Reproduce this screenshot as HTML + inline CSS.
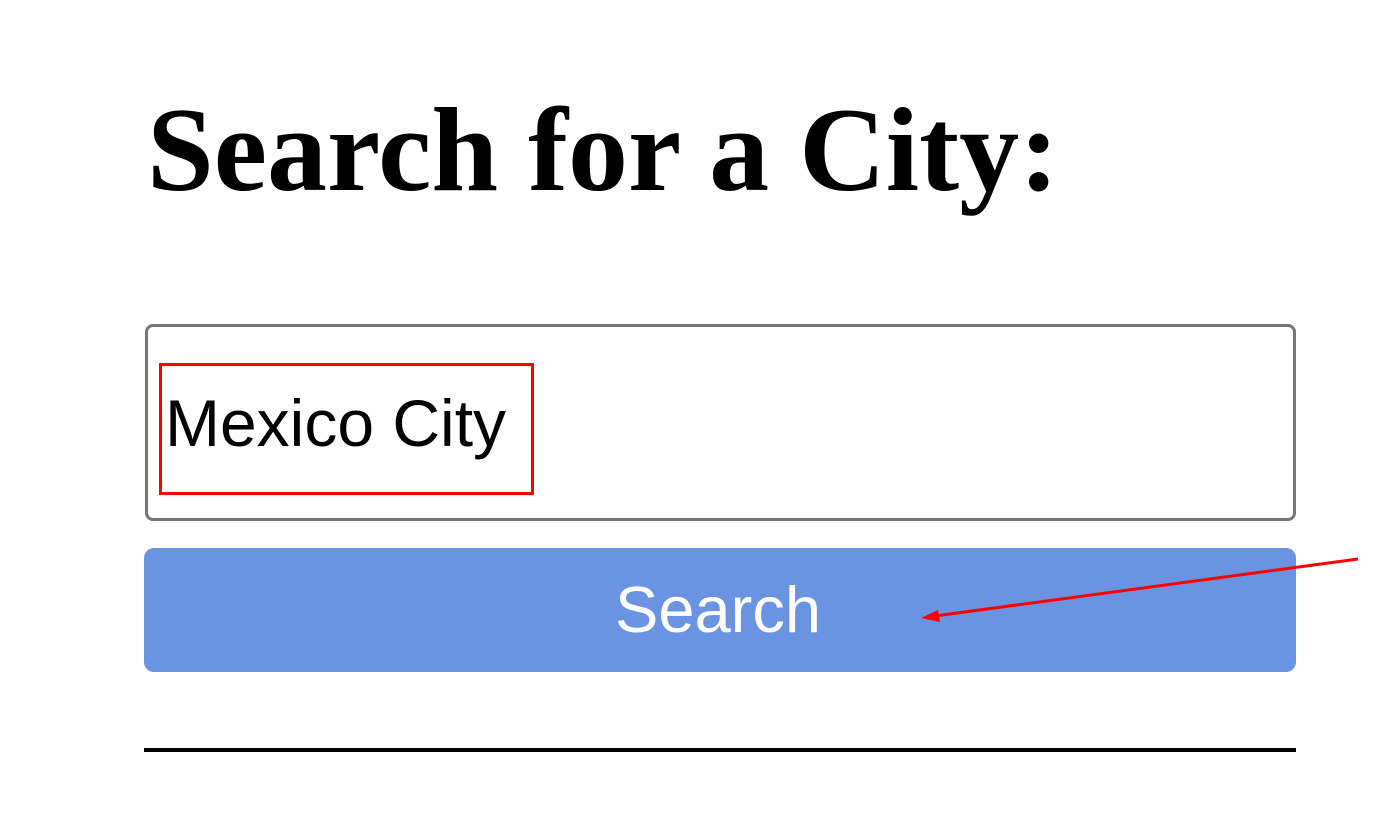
<!DOCTYPE html>
<html><head><meta charset="utf-8"><style>
html,body{margin:0;padding:0;background:#fff;width:1397px;height:819px;overflow:hidden;position:relative}
.h{position:absolute;left:147px;top:75px;font-family:"Liberation Serif",serif;font-weight:bold;font-size:120px;line-height:150px;margin:0;color:#000;white-space:nowrap}
.inp{position:absolute;left:145px;top:324px;width:1145px;height:191px;border:3px solid #777;border-radius:8px}
.txt{position:absolute;left:165px;top:385px;font-family:"Liberation Sans",sans-serif;font-size:66px;line-height:76px;color:#000;white-space:nowrap}
.red{position:absolute;left:159px;top:363px;width:369px;height:126px;border:3px solid #f00}
.btn{position:absolute;left:144px;top:548px;width:1152px;height:124px;background:#6a93e2;border-radius:10px;color:#fff;font-family:"Liberation Sans",sans-serif;font-size:65px;line-height:124px;text-align:center}
.hr{position:absolute;left:144px;top:748px;width:1152px;height:4px;background:#000}
svg{position:absolute;left:0;top:0}
</style></head><body>
<h1 class="h">Search for a City:</h1>
<div class="inp"></div>
<div class="txt">Mexico City</div>
<div class="red"></div>
<div class="btn"><span style="position:relative;left:-2px;top:0">Search</span></div>
<div class="hr"></div>
<svg width="1397" height="819"><line x1="1358" y1="559" x2="935" y2="616" stroke="#f00" stroke-width="3"/><polygon points="921,618 938,610 940,622" fill="#f00"/></svg>
</body></html>
